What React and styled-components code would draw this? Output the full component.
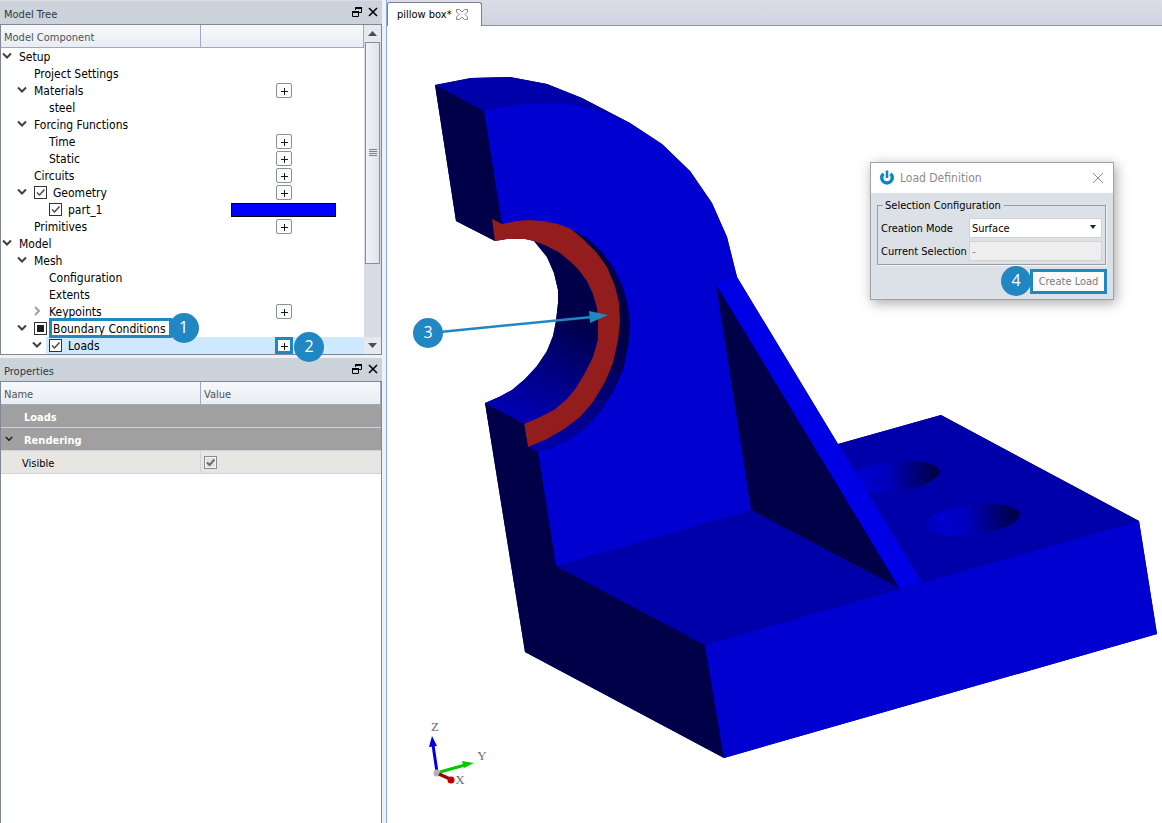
import React, { useState } from 'react';
import styled, { createGlobalStyle } from 'styled-components';

const GlobalStyle = createGlobalStyle`
    * {
        box-sizing: border-box;
    }

    body {
        margin: 0;
        background: #ffffff;
        font-family: 'DejaVu Sans Condensed', 'DejaVu Sans', sans-serif;
        font-size: 11px;
        line-height: 17px;
        color: #000000;
    }

    button, input, select {
        font: inherit;
        color: inherit;
    }
`;

const Workspace = styled.div`
    display: flex;
    min-height: 100vh;
    background: #eff1f6;
`;

const DockColumn = styled.aside`
    display: flex;
    flex-direction: column;
    flex: 0 0 382px;
    gap: 3px;
    margin-right: 4px;
    border-top: 1px solid #dcdce6;
`;

const Panel = styled.section`
    display: flex;
    flex-direction: column;
    flex: ${({ $grow }) => ($grow ? '1' : 'none')};
`;

const PanelTitle = styled.header`
    display: flex;
    align-items: center;
    justify-content: space-between;
    height: 23px;
    padding: 4px 4px 0;
    background: #ccd3db;
    color: #31373f;

    h2 {
        margin: 0;
        font-size: 11px;
        font-weight: 400;
    }
`;

const TitleButtons = styled.div`
    display: flex;
    gap: 6px;
    padding-bottom: 6px;
`;

const IconButton = styled.button`
    display: flex;
    padding: 0;
    border: none;
    background: transparent;
`;

const TreeFrame = styled.div`
    display: flex;
    border: 1px solid #808794;
    background: #ffffff;
`;

const TreeBody = styled.div`
    flex: 1;
`;

const ColumnHeader = styled.div`
    display: grid;
    grid-template-columns: 200px 1fr;
    height: 23px;
    border-bottom: 1px solid #a2a8bc;
    background: linear-gradient(#f7f8fb, #e9edf3);
    color: #4b525c;

    span {
        padding: 4px 0 0 3px;
        border-right: 1px solid #a2a8bc;
    }
`;

const Tree = styled.ul`
    margin: 0;
    padding: 0;
    list-style: none;
    font-size: 12px;
`;

const TreeRow = styled.li`
    display: grid;
    grid-template-columns: 200px 1fr;
    height: 17px;
`;

const NameCell = styled.div`
    display: flex;
    height: 17px;
    padding-left: ${({ $level }) => $level * 15}px;
`;

const Twisty = styled.span`
    display: flex;
    align-items: center;
    flex: 0 0 15px;
    padding: 0 0 2px 1px;
`;

const NodeName = styled.div`
    display: flex;
    align-items: center;
    flex: 1;
    gap: 3px;
    padding-left: 3px;
    background: ${({ $selected }) => ($selected ? '#cde8ff' : 'transparent')};
    white-space: nowrap;
`;

const NodeLabel = styled.label`
    position: relative;
    padding: 2px 3px 0 ${({ $checkable }) => ($checkable ? '3px' : '0')};
`;

const ValueCell = styled.div`
    display: flex;
    align-items: center;
    justify-content: center;
    padding-left: 3px;
    background: ${({ $selected }) => ($selected ? '#cde8ff' : 'transparent')};
`;

const AddSlot = styled.div`
    position: relative;
    display: flex;
`;

const AddButton = styled.button`
    display: flex;
    align-items: center;
    justify-content: center;
    width: 16px;
    height: 15px;
    padding: 0;
    border: 1px solid #8c8f96;
    border-radius: 2px;
    background: #fbfbfc;
`;

const ColorSwatch = styled.button`
    width: 105px;
    height: 14px;
    margin-right: 1px;
    padding: 0;
    border: 1px solid #000000;
    background: #0000ff;
`;

const CheckBox = styled.span`
    display: grid;
    flex: none;

    input, svg {
        grid-area: 1 / 1;
    }

    input {
        appearance: none;
        width: 13px;
        height: 13px;
        margin: 0;
        border: 1px solid ${({ $muted }) => ($muted ? '#8b8b8b' : '#333333')};
        background: #ffffff;
        box-shadow: ${({ $muted }) => ($muted ? 'inset 0 0 0 1px #f4f4f4, inset 0 0 0 9px #dfe2e6' : 'none')};
    }

    svg {
        pointer-events: none;
    }
`;

const Highlight = styled.span`
    position: absolute;
    inset: ${({ $inset }) => $inset};
    border: 3px solid #2087c3;
    pointer-events: none;
    z-index: 1;
`;

const Callout = styled.span`
    position: absolute;
    top: ${({ $top }) => $top};
    left: ${({ $left }) => $left};
    width: 30px;
    height: 30px;
    border-radius: 50%;
    background: #2087c3;
    color: #ffffff;
    font-family: 'Open Sans', 'Noto Sans', sans-serif;
    font-size: 16px;
    line-height: 29px;
    text-align: center;
    z-index: 2;
`;

const ScrollBar = styled.div`
    display: flex;
    flex-direction: column;
    flex: 0 0 17px;
    background: #d7dbe4;
`;

const ScrollArrow = styled.button`
    display: flex;
    align-items: center;
    justify-content: center;
    height: 17px;
    padding: 0;
    border: none;
    background: #e6e9ee;
`;

const ScrollThumb = styled.div`
    display: flex;
    align-items: center;
    justify-content: center;
    flex: 221;
    margin: 0 1px;
    border: 1px solid #878e9c;
    background: linear-gradient(90deg, #f0f2f6, #dfe3ea);
`;

const ScrollRest = styled.div`
    flex: 74;
`;

const PropertyFrame = styled.div`
    flex: 1;
    border: 1px solid #808794;
    border-bottom: none;
    background: #ffffff;
`;

const PropertyTable = styled.table`
    width: 100%;
    border-collapse: separate;
    border-spacing: 0;
    table-layout: fixed;

    th, td {
        height: 23px;
        padding: 2px 3px 0;
        border-bottom: 1px solid #cfd0e0;
        text-align: left;
        vertical-align: middle;
    }

    thead th {
        border-right: 1px solid #a2a8bc;
        border-bottom-color: #a2a8bc;
        background: linear-gradient(#f7f8fb, #e9edf3);
        color: #4b525c;
        font-weight: 400;
    }

    thead th:first-child {
        width: 200px;
    }

    tbody td {
        background: #e8e6e2;
    }

    tbody td:first-child {
        padding-left: 21px;
        border-right: 1px solid #cfd0e0;
    }

    tbody td:last-child {
        padding-top: 0;
    }
`;

const SectionName = styled.div`
    display: flex;
    align-items: center;
`;

const SectionRow = styled.tr`
    th {
        background: #a0a0a0;
        color: #ffffff;
        font-weight: 700;
    }

    svg {
        width: 20px;
        padding: 0 10px 2px 0;
    }

    span {
        width: 20px;
    }
`;

const DocumentArea = styled.main`
    display: flex;
    flex-direction: column;
    flex: 1;
    min-width: 0;
    border-left: 1px solid #86aee6;
    background: #ffffff;
`;

const TabBar = styled.div`
    display: flex;
    align-items: flex-end;
    height: 26px;
    border-bottom: 1px solid #7c96b4;
    background: linear-gradient(#dcdce8, #d3d2e1);
`;

const DocumentTab = styled.div`
    display: flex;
    align-items: center;
    gap: 4px;
    height: 24px;
    margin-bottom: -1px;
    padding: 0 13px 0 9px;
    border: 1px solid #74828f;
    border-bottom: none;
    border-radius: 3px 3px 0 0;
    background: #ffffff;
`;

const Viewport = styled.div`
    position: relative;
    flex: 1;
`;

const Scene = styled.svg`
    display: block;
    width: 100%;
    height: auto;
`;

const AxisText = styled.text`
    fill: #6a6a6a;
    font-family: 'Liberation Serif', serif;
    font-size: 13px;
    text-anchor: middle;
`;

const Dialog = styled.form`
    position: absolute;
    top: 136px;
    right: 48px;
    width: 244px;
    border: 1px solid #9ea2a8;
    background: #dce1e8;
    box-shadow: 2px 3px 12px rgba(0, 0, 0, 0.35);
`;

const DialogTitle = styled.header`
    display: flex;
    align-items: center;
    gap: 5px;
    height: 30px;
    padding: 0 9px 0 8px;
    background: #ffffff;
    color: #8b8b8b;

    h2 {
        flex: 1;
        margin: 0;
        font-size: 12px;
        font-weight: 400;
    }
`;

const DialogGroup = styled.fieldset`
    display: grid;
    grid-template-columns: auto 133px;
    align-items: center;
    justify-content: space-between;
    row-gap: 3px;
    margin: 4px 7px 0 6px;
    padding: 4px 3px 3px;
    border: 1px solid #9a9d9f;
    box-shadow: 1px 1px 0 #f4f6f8;
    white-space: nowrap;

    legend {
        padding: 0 3px 0 2px;
        margin-left: 2px;
    }
`;

const SelectWrap = styled.div`
    display: grid;
    align-items: center;

    select, svg {
        grid-area: 1 / 1;
    }

    svg {
        justify-self: end;
        margin: 0 6px 3px 0;
        pointer-events: none;
    }
`;

const ModeSelect = styled.select`
    appearance: none;
    height: 20px;
    padding: 0 2px;
    border: 1px solid #cfd3d9;
    border-radius: 0;
    background: #ffffff;
`;

const SelectionInput = styled.input`
    width: 100%;
    height: 20px;
    padding: 0 2px;
    border: 1px solid #cfd3d6;
    background: #eeeeee;
    color: #777777;
`;

const DialogActions = styled.footer`
    display: flex;
    justify-content: flex-end;
    padding: 4px 6px 5px;
`;

const CreateButton = styled.button`
    position: relative;
    width: 77px;
    height: 25px;
    padding: 0;
    border: 3px solid #2087c3;
    background: #fbfbfb;
    color: #7b7b7b;
`;

const treeNodes = [
    { name: 'Setup', level: 0, open: true },
    { name: 'Project Settings', level: 1 },
    { name: 'Materials', level: 1, open: true, add: true },
    { name: 'steel', level: 2 },
    { name: 'Forcing Functions', level: 1, open: true },
    { name: 'Time', level: 2, add: true },
    { name: 'Static', level: 2, add: true },
    { name: 'Circuits', level: 1, add: true },
    { name: 'Geometry', level: 1, open: true, check: 'on', add: true },
    { name: 'part_1', level: 2, check: 'on', color: true },
    { name: 'Primitives', level: 1, add: true },
    { name: 'Model', level: 0, open: true },
    { name: 'Mesh', level: 1, open: true },
    { name: 'Configuration', level: 2 },
    { name: 'Extents', level: 2 },
    { name: 'Keypoints', level: 2, open: false, add: true },
    { name: 'Boundary Conditions', level: 1, open: true, check: 'partial', callout: 1 },
    { name: 'Loads', level: 2, open: true, check: 'on', add: true, selected: true, addCallout: 2 },
];

const Chevron = ({ open = true, color = '#404040' }) => (
    <svg width="10" height="10" viewBox="0 0 10 10" fill="none" strokeWidth="2">
        {open
            ? <path d="M1 2.5 5 6.5 9 2.5" stroke={color} />
            : <path d="M3 1 7 5 3 9" stroke="#a0a0a0" />}
    </svg>
);

const RestoreIcon = () => (
    <svg width="10" height="10" viewBox="0 0 10 10" fill="none" stroke="#000">
        <path d="M3.5 3V.5h6v5H7" />
        <path d="M3 1h7" strokeWidth="2" />
        <path d="M.5 4.5h6v5h-6z" />
        <path d="M0 5h7" strokeWidth="2" />
    </svg>
);

const CloseIcon = () => (
    <svg width="10" height="10" viewBox="0 0 10 10" stroke="#000" strokeWidth="1.6">
        <path d="M1 1 9 9M9 1 1 9" />
    </svg>
);

const TabCloseIcon = () => (
    <svg width="12" height="11" viewBox="0 0 12 11" fill="#fff" stroke="#85898e">
        <path d="M.5.5h3L6 3 8.500.5h3v2.500L9 5.500l2.500 2.500v2.500h-3L6 8l-2.500 2.500h-3V8L3 5.500.5 3z" />
    </svg>
);

const PowerIcon = () => (
    <svg width="16" height="16" viewBox="0 0 16 16" fill="none" stroke="#0d84c6">
        <path d="M4.500 3.700A5.300 5.300 0 1 0 11.500 3.700" strokeWidth="3.400" />
        <path d="M8 .5V8" strokeWidth="2.600" />
    </svg>
);

const PlusIcon = () => (
    <svg width="8" height="8" viewBox="0 0 8 8" stroke="#1a1a1a">
        <path d="M4.500 1v7M1 4.500h7" />
    </svg>
);

const Triangle = ({ up }) => (
    <svg width="9" height="5" viewBox="0 0 9 5" fill="#4b4f55">
        <path d={up ? 'M0 5 4.500 0 9 5z' : 'M0 0 4.500 5 9 0z'} />
    </svg>
);

const Check = ({ id, state, muted, label }) => {
    const [checked, setChecked] = useState(state === 'on');

    return (
        <CheckBox $muted={muted}>
            <input
                type="checkbox"
                id={id}
                aria-label={label}
                checked={checked}
                onChange={(e) => setChecked(e.target.checked)}
            />
            <svg width="13" height="13" viewBox="0 0 13 13" fill="none">
                {checked && (
                    <path
                        d="M3 6.500 5.500 9 10.500 3.500"
                        stroke={muted ? '#6e6e6e' : '#4a4a4a'}
                        strokeWidth={muted ? 2 : 1.500}
                    />
                )}
                {!checked && state === 'partial' && <path d="M3 3h7v7H3z" fill="#1e1e1e" />}
            </svg>
        </CheckBox>
    );
};

const PanelHeader = ({ title }) => (
    <PanelTitle>
        <h2>{title}</h2>
        <TitleButtons>
            <IconButton type="button" aria-label={`Float ${title}`}><RestoreIcon /></IconButton>
            <IconButton type="button" aria-label={`Close ${title}`}><CloseIcon /></IconButton>
        </TitleButtons>
    </PanelTitle>
);

const TreeNode = ({ node }) => {
    const id = `node-${node.name.replace(/\s/g, '-').toLowerCase()}`;

    return (
        <TreeRow>
            <NameCell $level={node.level}>
                <Twisty>{node.open !== undefined && <Chevron open={node.open} />}</Twisty>
                <NodeName $selected={node.selected}>
                    {node.check && <Check id={id} state={node.check} />}
                    <NodeLabel as={node.check ? 'label' : 'span'} htmlFor={node.check ? id : undefined} $checkable={node.check}>
                        {node.name}
                        {node.callout && (
                            <>
                                <Highlight $inset="-1px -3px 0 -1px" />
                                <Callout $top="-6px" $left="100%">{node.callout}</Callout>
                            </>
                        )}
                    </NodeLabel>
                </NodeName>
            </NameCell>
            <ValueCell $selected={node.selected}>
                {node.color && <ColorSwatch type="button" aria-label={`${node.name} color`} />}
                {node.add && (
                    <AddSlot>
                        <AddButton type="button" aria-label={`Add to ${node.name}`}><PlusIcon /></AddButton>
                        {node.addCallout && (
                            <>
                                <Highlight $inset="-1px" />
                                <Callout $top="-6px" $left="18px">{node.addCallout}</Callout>
                            </>
                        )}
                    </AddSlot>
                )}
            </ValueCell>
        </TreeRow>
    );
};

const ModelTree = () => (
    <Panel>
        <PanelHeader title="Model Tree" />
        <TreeFrame>
            <TreeBody>
                <ColumnHeader>
                    <span>Model Component</span>
                    <span />
                </ColumnHeader>
                <Tree>
                    {treeNodes.map(node => <TreeNode key={node.name} node={node} />)}
                </Tree>
            </TreeBody>
            <ScrollBar>
                <ScrollArrow type="button" aria-label="Scroll up"><Triangle up /></ScrollArrow>
                <ScrollThumb>
                    <svg width="8" height="8" viewBox="0 0 8 8" stroke="#7b808a">
                        <path d="M0 .5h8M0 2.500h8M0 4.500h8M0 6.500h8" />
                    </svg>
                </ScrollThumb>
                <ScrollRest />
                <ScrollArrow type="button" aria-label="Scroll down"><Triangle /></ScrollArrow>
            </ScrollBar>
        </TreeFrame>
    </Panel>
);

const Properties = () => (
    <Panel $grow>
        <PanelHeader title="Properties" />
        <PropertyFrame>
            <PropertyTable>
                <thead>
                    <tr>
                        <th>Name</th>
                        <th>Value</th>
                    </tr>
                </thead>
                <tbody>
                    <SectionRow>
                        <th colSpan="2"><SectionName><span />Loads</SectionName></th>
                    </SectionRow>
                    <SectionRow>
                        <th colSpan="2"><SectionName><Chevron color="#202020" />Rendering</SectionName></th>
                    </SectionRow>
                    <tr>
                        <td>Visible</td>
                        <td><Check state="on" label="Visible" muted /></td>
                    </tr>
                </tbody>
            </PropertyTable>
        </PropertyFrame>
    </Panel>
);

const PillowBoxScene = () => (
    <Scene viewBox="387 26 775 797" role="img" aria-label="pillow box geometry">
        <defs>
            <linearGradient id="bore" gradientUnits="userSpaceOnUse" x1="580" y1="320" x2="530" y2="420">
                <stop offset="0" stopColor="#000048" />
                <stop offset="0.500" stopColor="#000080" />
                <stop offset="1" stopColor="#0000b0" />
            </linearGradient>
            <linearGradient id="rim" gradientUnits="userSpaceOnUse" x1="625" y1="345" x2="550" y2="450">
                <stop offset="0" stopColor="#000048" />
                <stop offset="0.500" stopColor="#000080" />
                <stop offset="1" stopColor="#0000aa" />
            </linearGradient>
            <linearGradient id="hole">
                <stop offset="0" stopColor="#0000b4" />
                <stop offset="0.200" stopColor="#0000d0" />
                <stop offset="0.450" stopColor="#0000bc" />
                <stop offset="0.750" stopColor="#000078" />
                <stop offset="0.950" stopColor="#000048" />
            </linearGradient>
        </defs>

        {/* solid silhouette, keeps the seams between faces closed */}
        <path fill="#000090" d="M435 85 471 78 510 77 547 84 582 98 630 123 662 144 690 171 712 203 727 237 737 277 838 444 941 415 1139 521 1157 634 724 758 525 652 485 403 499 397 512 390 525 379 537 366 547 351 553 336 556 321 558 303 558 290 554 273 547 257 534 241 525 239 507 239 495 241 456 221z" />

        {/* arch: top surface, end face, bore and counterbore */}
        <path fill="#0000aa" d="M435 85 471 78 510 77 547 84 582 98 630 123 600 120 484 111z" />
        <path fill="#0000d0" d="M484 111 521 104 561 103 582 107 605 113 630 123 662 144 690 171 712 203 727 237 737 277 760 510 751 511 556 566 538 452 555 447 570 439 587 427 600 412 613 392 623 370 628 347 630 327 628 307 623 287 613 267 602 252 587 238 571 229 558 224 543 221 528 220 517 221 502 224z" />
        <path fill="#000048" d="M435 85 484 111 502 224 492 219 495 241 456 221z" />
        <path fill="url(#bore)" d="M534 241 547 257 554 273 558 290 558 303 556 321 553 336 547 351 537 366 525 379 512 390 499 397 485 403 524 424 538 418 554 410 567 399 576 388 585 373 593 357 597 340 598 325 597 308 593 294 587 281 578 269 572 263 560 253 547 246z" />
        <path fill="url(#rim)" d="M571 229 587 238 602 252 613 267 623 287 628 307 630 327 628 347 623 370 613 392 600 412 587 427 570 439 555 447 538 452 528 447 590 380 610 320z" />
        <path fill="#931c1c" d="M492 219 502 224 517 221 528 220 543 221 558 224 571 229 583 239 597 253 607 267 615 286 619 303 620 322 618 340 613 363 605 382 593 402 580 417 564 429 547 439 528 447 524 424 538 418 554 410 567 399 576 388 585 373 593 357 598 340 598 325 597 308 593 294 587 281 578 269 572 263 560 253 547 246 534 241 525 239 507 239 495 241z" />

        {/* base block */}
        <path fill="#000048" d="M485 403 524 424 528 447 538 452 556 566 705 645 724 758 525 652z" />
        <path fill="#0000aa" d="M556 566 751 510 838 444 941 415 1139 521 705 645z" />
        <path fill="#0000d0" d="M705 645 1139 521 1157 634 724 758z" />
        <ellipse cx="892" cy="477" rx="48" ry="15" transform="rotate(-7 892 477)" fill="url(#hole)" />
        <ellipse cx="972" cy="520" rx="48" ry="15" transform="rotate(-7 972 520)" fill="url(#hole)" />

        {/* gusset */}
        <path fill="#000048" d="M716 284 751 510 901 589z" />
        <path fill="#0000e6" d="M716 284 737 277 838 444 922 582.500 900 589z" />

        {/* orientation axes */}
        <path stroke="#0000e0" strokeWidth="3" d="M437 772 433 745" />
        <path fill="#0000e0" d="M432 736 437 746 429 747z" />
        <path stroke="#00c800" strokeWidth="3" d="M440 772 465 765" />
        <path fill="#00c800" d="M474 763 464 768 462 761z" />
        <circle cx="437" cy="773" r="3.500" fill="#b4b4b4" />
        <path stroke="#a00000" strokeWidth="3.500" d="M439 774 450 779" />
        <circle cx="451" cy="780" r="3.500" fill="#c00000" />
        <AxisText x="435" y="731">Z</AxisText>
        <AxisText x="482" y="760">Y</AxisText>
        <AxisText x="460" y="784">X</AxisText>

        <path stroke="#2087c3" strokeWidth="2.500" d="M440 332 592 317" />
        <path fill="#2087c3" d="M608 315 589 311 590 323z" />
    </Scene>
);

const LoadDialog = () => (
    <Dialog onSubmit={(e) => e.preventDefault()}>
        <DialogTitle>
            <PowerIcon />
            <h2>Load Definition</h2>
            <IconButton type="button" aria-label="Close dialog">
                <svg width="12" height="12" viewBox="0 0 12 12" stroke="#8b8b8b">
                    <path d="M1 1 11 11M11 1 1 11" />
                </svg>
            </IconButton>
        </DialogTitle>
        <DialogGroup>
            <legend>Selection Configuration</legend>
            <label htmlFor="creation-mode">Creation Mode</label>
            <SelectWrap>
                <ModeSelect id="creation-mode" defaultValue="Surface">
                    <option>Surface</option>
                </ModeSelect>
                <svg width="6" height="4" viewBox="0 0 6 4" fill="#222">
                    <path d="M0 0h6L3 4z" />
                </svg>
            </SelectWrap>
            <label htmlFor="current-selection">Current Selection</label>
            <SelectionInput id="current-selection" value="-" readOnly />
        </DialogGroup>
        <DialogActions>
            <CreateButton type="submit">
                Create Load
                <Callout $top="-6px" $left="-32px">4</Callout>
            </CreateButton>
        </DialogActions>
    </Dialog>
);

const App = () => {
    return (
        <>
            <GlobalStyle />
            <Workspace>
                <DockColumn>
                    <ModelTree />
                    <Properties />
                </DockColumn>
                <DocumentArea>
                    <TabBar>
                        <DocumentTab>
                            pillow box*
                            <IconButton type="button" aria-label="Close pillow box"><TabCloseIcon /></IconButton>
                        </DocumentTab>
                    </TabBar>
                    <Viewport>
                        <PillowBoxScene />
                        <Callout $top="292px" $left="26px">3</Callout>
                        <LoadDialog />
                    </Viewport>
                </DocumentArea>
            </Workspace>
        </>
    );
};

export default App;
